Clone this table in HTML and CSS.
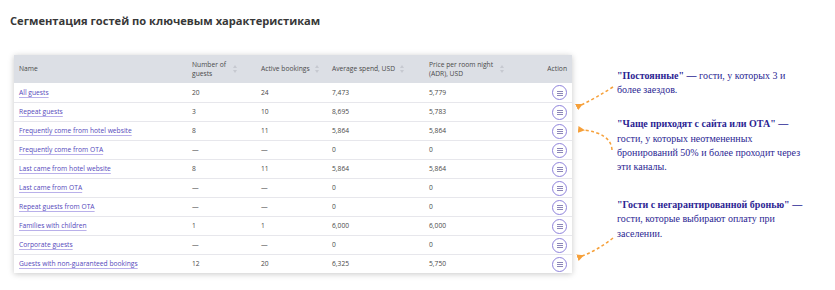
FILE: index.html
```html
<!DOCTYPE html>
<html lang="ru">
<head>
<meta charset="utf-8">
<link rel="stylesheet" href="styles.css">
</head>
<body>
<div class="page">
  <h1 class="title">Сегментация гостей по ключевым характеристикам</h1>
  <div class="content">
    <div class="card">
      <table class="grid">
        <colgroup>
          <col class="c-name"><col class="c-num"><col class="c-act"><col class="c-avg"><col class="c-price"><col class="c-action">
        </colgroup>
        <thead>
          <tr>
            <th><span class="hd">Name</span></th>
            <th><span class="hd"><span class="ht w-num">Number of guests</span><span class="sort"></span></span></th>
            <th><span class="hd"><span class="ht">Active bookings</span><span class="sort"></span></span></th>
            <th><span class="hd"><span class="ht">Average spend, USD</span><span class="sort"></span></span></th>
            <th><span class="hd"><span class="ht w-price">Price per room night (ADR), USD</span><span class="sort"></span></span></th>
            <th class="r">Action</th>
          </tr>
        </thead>
        <tbody>
          <tr><td><a>All guests</a></td><td>20</td><td>24</td><td>7,473</td><td>5,779</td><td class="r"><span class="btn"></span></td></tr>
          <tr><td><a>Repeat guests</a></td><td>3</td><td>10</td><td>8,695</td><td>5,783</td><td class="r"><span class="btn"></span></td></tr>
          <tr><td><a>Frequently come from hotel website</a></td><td>8</td><td>11</td><td>5,864</td><td>5,864</td><td class="r"><span class="btn"></span></td></tr>
          <tr><td><a>Frequently come from OTA</a></td><td>—</td><td>—</td><td>0</td><td>0</td><td class="r"><span class="btn"></span></td></tr>
          <tr><td><a>Last came from hotel website</a></td><td>8</td><td>11</td><td>5,864</td><td>5,864</td><td class="r"><span class="btn"></span></td></tr>
          <tr><td><a>Last came from OTA</a></td><td>—</td><td>—</td><td>0</td><td>0</td><td class="r"><span class="btn"></span></td></tr>
          <tr><td><a>Repeat guests from OTA</a></td><td>—</td><td>—</td><td>0</td><td>0</td><td class="r"><span class="btn"></span></td></tr>
          <tr><td><a>Families with children</a></td><td>1</td><td>1</td><td>6,000</td><td>6,000</td><td class="r"><span class="btn"></span></td></tr>
          <tr><td><a>Corporate guests</a></td><td>—</td><td>—</td><td>0</td><td>0</td><td class="r"><span class="btn"></span></td></tr>
          <tr><td><a>Guests with non-guaranteed bookings</a></td><td>12</td><td>20</td><td>6,325</td><td>5,750</td><td class="r"><span class="btn"></span></td></tr>
        </tbody>
      </table>
    </div>
    <div class="notes">
      <p class="note n1"><b>"Постоянные" —</b> гости, у которых 3 и<br>более заездов.</p>
      <p class="note n2"><b>"Чаще приходят с сайта или ОТА" —</b><br>гости, у которых неотмененных<br>бронирований 50% и более проходит через<br>эти каналы.</p>
      <p class="note n3"><b>"Гости с негарантированной бронью" —</b><br>гости, которые выбирают оплату при<br>заселении.</p>
    </div>
  </div>
  <svg class="arrows" width="835" height="290" viewBox="0 0 835 290">
    <defs>
      <marker id="ah" viewBox="0 0 10 10" refX="3" refY="5" markerWidth="7" markerHeight="7" markerUnits="userSpaceOnUse" orient="auto">
        <path d="M10,0 L0,5 L10,10 z" fill="#f6a03a"/>
      </marker>
    </defs>
    <path d="M613,87 Q596,98 581,105" marker-end="url(#ah)" class="dash"/>
    <path d="M612,150 Q611,133 583,130" marker-end="url(#ah)" class="dash"/>
    <path d="M613,238 Q598,250 582,256" marker-end="url(#ah)" class="dash"/>
  </svg>
</div>
</body>
</html>
```

FILE: styles.css
```css
* { box-sizing: border-box; }
html, body { margin: 0; padding: 0; background: #fff; }
.page {
  position: relative;
  width: 835px;
  height: 290px;
  padding: 13px 0 0 10px;
  font-family: "Open Sans", "Noto Sans", sans-serif;
}
.title {
  margin: 0;
  font-size: 11.15px;
  line-height: 16px;
  font-weight: 700;
  color: #383838;
}
.content {
  display: flex;
  align-items: flex-start;
  margin-top: 26px;
  padding-left: 4px;
}
.card {
  width: 558px;
  background: #fff;
  box-shadow: 0 1px 6px rgba(0, 0, 0, 0.22);
}
.grid {
  width: 100%;
  border-collapse: collapse;
  table-layout: fixed;
  font-size: 6.7px;
  color: #484848;
}
.c-name { width: 173px; }
.c-num { width: 69px; }
.c-act { width: 71px; }
.c-avg { width: 97px; }
.c-price { width: 96px; }
.c-action { width: 52px; }
thead tr { background: #dcdfe5; height: 28px; }
th {
  text-align: left;
  font-weight: 400;
  color: #4a4a4a;
  padding: 0 0 0 5px;
  vertical-align: middle;
  line-height: 9.5px;
  white-space: nowrap;
}
th.r, td.r { text-align: right; padding-right: 5px; }
.hd { display: flex; align-items: center; }
.ht { display: block; }
.w-num, .w-price { white-space: normal; }
.w-num { width: 36px; }
.w-price { width: 66px; }
.sort {
  display: inline-block;
  position: relative;
  width: 5px;
  height: 8px;
  margin-left: 5px;
  flex: none;
}
.sort::before, .sort::after {
  content: "";
  position: absolute;
  left: 0;
  border-left: 2.5px solid transparent;
  border-right: 2.5px solid transparent;
}
.sort::before { top: 0; border-bottom: 3px solid #c6c9d0; }
.sort::after { bottom: 0; border-top: 3px solid #c6c9d0; }
tbody tr { height: 19px; border-top: 1px solid #e7e7ec; }
tbody tr:first-child { border-top: none; }
td {
  padding: 1px 0 0 5px;
  vertical-align: middle;
  line-height: 10px;
  white-space: nowrap;
}
td a {
  color: #5448bb;
  text-decoration: underline;
  text-decoration-color: #b9b0ea;
  text-underline-offset: 1.5px;
}
.btn {
  display: inline-block;
  width: 15px;
  height: 15px;
  border: 1px solid #8f83dc;
  border-radius: 50%;
  vertical-align: middle;
  background:
    linear-gradient(#8c86b8, #8c86b8) center 4.5px / 6px 1px no-repeat,
    linear-gradient(#8c86b8, #8c86b8) center 6.5px / 6px 1px no-repeat,
    linear-gradient(#8c86b8, #8c86b8) center 8.5px / 6px 1px no-repeat,
    #fff;
}
.notes {
  margin-left: 45px;
  padding-top: 14px;
  font-family: "Liberation Serif", "DejaVu Serif", serif;
  font-size: 10px;
  line-height: 14.2px;
  color: #2c1f93;
}
.note { margin: 0; }
.n2 { margin-top: 20px; }
.n3 { margin-top: 24px; }
.arrows {
  position: absolute;
  left: 0;
  top: 0;
  pointer-events: none;
}
.dash {
  fill: none;
  stroke: #f6a03a;
  stroke-width: 1.5;
  stroke-dasharray: 3 2.5;
}
```
